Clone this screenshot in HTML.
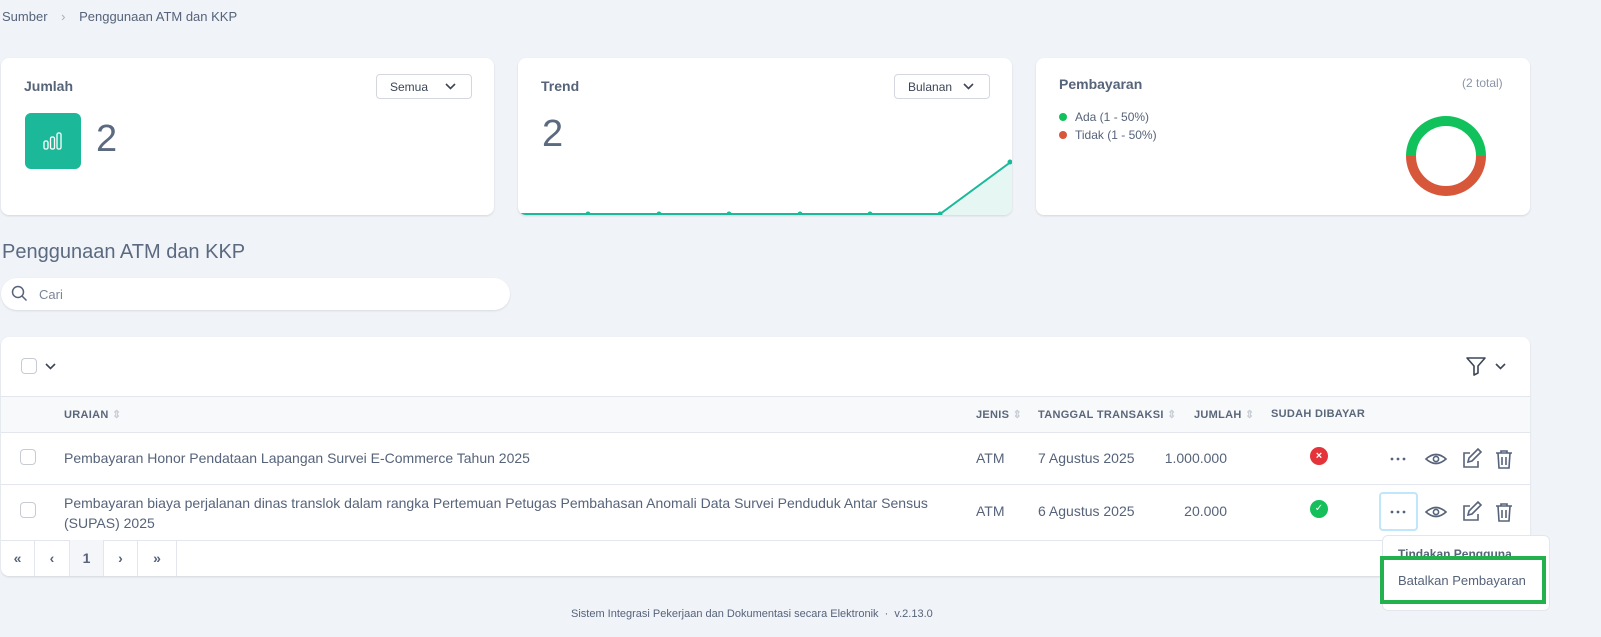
<!DOCTYPE html>
<html><head><meta charset="utf-8"><style>
*{box-sizing:border-box;margin:0;padding:0}
body{width:1601px;height:637px;background:#f0f3f8;font-family:"Liberation Sans",sans-serif;color:#4b5a6e;position:relative;overflow:hidden}
.a{position:absolute}
.card{position:absolute;background:#fff;border-radius:8px;box-shadow:0 1px 2px rgba(0,0,0,.12)}
.t{font-size:14px;font-weight:bold;color:#566479}
.sel{position:absolute;border:1px solid #d4d8de;border-radius:4px;height:25px;font-size:12px;color:#3c4656;padding:5px 0 0 13px;background:#fff}
.chk{position:absolute;width:16px;height:16px;border:1px solid #c7ccd3;border-radius:4px;background:#fff}
.th{position:absolute;top:408px;font-size:11px;font-weight:bold;color:#5a677a;letter-spacing:.3px}
.td{position:absolute;font-size:14px;color:#56637a}
.hl{position:absolute;left:1px;width:1529px;height:1px;background:#e3e7ed}
</style></head><body>
<div class="a" style="left:2px;top:9px;font-size:13px;color:#56637a">Sumber <span style="color:#aab;margin:0 10px">›</span> Penggunaan ATM dan KKP</div>

<div class="card" style="left:1px;top:58px;width:493px;height:157px">
<div class="a t" style="left:23px;top:20px">Jumlah</div>
<div class="sel" style="left:375px;top:16px;width:96px">Semua<svg class="a" style="left:68px;top:8px" width="11" height="7" viewBox="0 0 11 7"><path d="M1 1l4.5 4.5L10 1" fill="none" stroke="#3c4656" stroke-width="1.6"/></svg></div>
<div class="a" style="left:24px;top:55px;width:56px;height:56px;background:#1bb99a;border-radius:6px"><svg class="a" style="left:18px;top:18px" width="20" height="20" viewBox="0 0 20 20" fill="none" stroke="#fff" stroke-width="1.3"><rect x="1" y="10" width="4" height="8" rx="1.5"/><rect x="7.5" y="6" width="4" height="12" rx="1.5"/><rect x="14" y="2" width="4" height="16" rx="1.5"/></svg></div>
<div class="a" style="left:95px;top:60px;font-size:38px;color:#5b6a80">2</div>
</div>

<div class="card" style="left:518px;top:58px;width:494px;height:157px;overflow:hidden">
<div class="a t" style="left:23px;top:20px">Trend</div>
<div class="sel" style="left:376px;top:16px;width:96px">Bulanan<svg class="a" style="left:68px;top:8px" width="11" height="7" viewBox="0 0 11 7"><path d="M1 1l4.5 4.5L10 1" fill="none" stroke="#3c4656" stroke-width="1.6"/></svg></div>
<div class="a" style="left:24px;top:55px;font-size:38px;color:#5b6a80">2</div>
<svg class="a" style="left:0;top:95px" width="494" height="62" viewBox="0 0 494 62"><path d="M0 61L422 61L494 8L494 62L0 62Z" fill="#e6f6f2"/><path d="M0 61L422 61L494 8" fill="none" stroke="#1bb99a" stroke-width="2"/><g fill="#1bb99a"><circle cx="70" cy="61" r="2.5"/><circle cx="141" cy="61" r="2.5"/><circle cx="211" cy="61" r="2.5"/><circle cx="282" cy="61" r="2.5"/><circle cx="352" cy="61" r="2.5"/><circle cx="422" cy="61" r="2.5"/><circle cx="492" cy="9" r="2.5"/></g></svg>
</div>

<div class="card" style="left:1036px;top:58px;width:494px;height:157px">
<div class="a t" style="left:23px;top:18px">Pembayaran</div>
<div class="a" style="left:426px;top:18px;font-size:12px;color:#8a96a8">(2 total)</div>
<div class="a" style="left:23px;top:55px;width:8px;height:8px;border-radius:50%;background:#11c15b"></div>
<div class="a" style="left:39px;top:52px;font-size:12px;color:#56637a">Ada (1 - 50%)</div>
<div class="a" style="left:23px;top:73px;width:8px;height:8px;border-radius:50%;background:#d7573a"></div>
<div class="a" style="left:39px;top:70px;font-size:12px;color:#56637a">Tidak (1 - 50%)</div>
<svg class="a" style="left:370px;top:58px" width="80" height="80" viewBox="0 0 80 80"><path d="M5 40A35 35 0 0 1 75 40" fill="none" stroke="#11c15b" stroke-width="10"/><path d="M75 40A35 35 0 0 1 5 40" fill="none" stroke="#d7573a" stroke-width="10"/></svg>
</div>

<div class="a" style="left:2px;top:241px;font-size:20px;color:#5b6a80">Penggunaan ATM dan KKP</div>
<div class="a" style="left:1px;top:278px;width:509px;height:32px;background:#fff;border-radius:16px;box-shadow:0 1px 2px rgba(0,0,0,.1)">
<svg class="a" style="left:10px;top:7px" width="17" height="17" viewBox="0 0 17 17" fill="none" stroke="#56637a" stroke-width="1.5"><circle cx="7" cy="7" r="5.5"/><path d="M11 11l4.5 4.5"/></svg>
<div class="a" style="left:38px;top:9px;font-size:13px;color:#7a8698">Cari</div></div>

<div class="card" style="left:1px;top:337px;width:1529px;height:239px"></div>
<div class="chk" style="left:21px;top:358px"></div>
<svg class="a" style="left:45px;top:363px" width="11" height="7" viewBox="0 0 11 7"><path d="M1 1l4.5 4.5L10 1" fill="none" stroke="#3c4656" stroke-width="1.6"/></svg>
<svg class="a" style="left:1465px;top:355px" width="22" height="22" viewBox="0 0 22 22"><path d="M2 3h18l-7 8v7l-4 2v-9z" fill="none" stroke="#3c4656" stroke-width="1.6" stroke-linejoin="round"/></svg>
<svg class="a" style="left:1495px;top:363px" width="11" height="7" viewBox="0 0 11 7"><path d="M1 1l4.5 4.5L10 1" fill="none" stroke="#3c4656" stroke-width="1.6"/></svg>
<div class="a" style="left:1px;top:396px;width:1529px;height:37px;background:#f8f9fb"></div>
<div class="hl" style="top:396px"></div><div class="hl" style="top:432px"></div><div class="hl" style="top:484px"></div><div class="hl" style="top:540px"></div>
<div class="th" style="left:64px">URAIAN <span style="color:#c8ced6">⇕</span></div>
<div class="th" style="left:976px">JENIS <span style="color:#c8ced6">⇕</span></div>
<div class="th" style="left:1038px">TANGGAL TRANSAKSI <span style="color:#c8ced6">⇕</span></div>
<div class="th" style="left:1194px">JUMLAH <span style="color:#c8ced6">⇕</span></div>
<div class="th" style="left:1271px">SUDAH DIBAYAR</div>

<div class="chk" style="left:20px;top:449px"></div>
<div class="td" style="left:64px;top:450px">Pembayaran Honor Pendataan Lapangan Survei E-Commerce Tahun 2025</div>
<div class="td" style="left:976px;top:450px">ATM</div>
<div class="td" style="left:1038px;top:450px">7 Agustus 2025</div>
<div class="td" style="left:1120px;width:107px;text-align:right;top:450px">1.000.000</div>
<div class="a" style="left:1310px;top:447px;width:18px;height:18px;border-radius:50%;background:#e5333b;color:#fff;font-size:11px;text-align:center;line-height:18px;font-weight:bold">×</div>

<div class="chk" style="left:20px;top:502px"></div>
<div class="td" style="left:64px;top:493px;line-height:20px">Pembayaran biaya perjalanan dinas translok dalam rangka Pertemuan Petugas Pembahasan Anomali Data Survei Penduduk Antar Sensus<br>(SUPAS) 2025</div>
<div class="td" style="left:976px;top:503px">ATM</div>
<div class="td" style="left:1038px;top:503px">6 Agustus 2025</div>
<div class="td" style="left:1120px;width:107px;text-align:right;top:503px">20.000</div>
<div class="a" style="left:1310px;top:500px;width:18px;height:18px;border-radius:50%;background:#15bf5a;color:#fff;font-size:10px;text-align:center;line-height:18px">✓</div>

<div class="a" style="left:1379px;top:492px;width:39px;height:39px;border:2px solid #bfe6fb;border-radius:4px"></div>
<svg width="0" height="0" style="position:absolute"><defs>
<g id="ic"><g fill="#56637a"><circle cx="2" cy="11" r="1.4"/><circle cx="8" cy="11" r="1.4"/><circle cx="14" cy="11" r="1.4"/></g>
<g fill="none" stroke="#56637a" stroke-width="1.6"><path d="M36 11q10-9 20 0q-10 9-20 0z"/><circle cx="46" cy="11" r="2.6"/>
<path d="M80 5h-6v14h14v-6M78 14l1-4 9-9 3 3-9 9z"/>
<path d="M106 5h16M111 5V3h6v2M108 5l1 15h10l1-15M112 9v8M116 9v8"/></g></g></defs></svg>
<svg class="a" style="left:1390px;top:448px" width="130" height="24"><use href="#ic"/></svg>
<svg class="a" style="left:1390px;top:501px" width="130" height="24"><use href="#ic"/></svg>

<div class="a" style="left:1px;top:540px;width:176px;height:36px;font-size:14px;font-weight:bold;color:#56637a">
<div class="a" style="left:0;width:34px;height:36px;border-right:1px solid #e3e7ed;text-align:center;line-height:36px">«</div>
<div class="a" style="left:34px;width:35px;height:36px;border-right:1px solid #e3e7ed;text-align:center;line-height:36px">‹</div>
<div class="a" style="left:69px;width:34px;height:36px;border-right:1px solid #e3e7ed;background:#f4f6f9;text-align:center;line-height:36px">1</div>
<div class="a" style="left:103px;width:34px;height:36px;border-right:1px solid #e3e7ed;text-align:center;line-height:36px">›</div>
<div class="a" style="left:137px;width:39px;height:36px;border-right:1px solid #e3e7ed;text-align:center;line-height:36px">»</div></div>

<div class="a" style="left:1382px;top:535px;width:168px;height:76px;background:#fff;border:1px solid #e3e7ed;border-radius:6px"></div>
<div class="a" style="left:1398px;top:547px;font-size:12px;font-weight:bold;color:#56637a;height:9px;overflow:hidden">Tindakan Pengguna</div>
<div class="a" style="left:1380px;top:556px;width:166px;height:48px;border:4px solid #22b14c;background:#fff"></div>
<div class="a" style="left:1398px;top:573px;font-size:13px;color:#56637a">Batalkan Pembayaran</div>

<div class="a" style="left:571px;top:608px;font-size:11px;color:#56637a">Sistem Integrasi Pekerjaan dan Dokumentasi secara Elektronik &nbsp;·&nbsp; v.2.13.0</div>
</body></html>
